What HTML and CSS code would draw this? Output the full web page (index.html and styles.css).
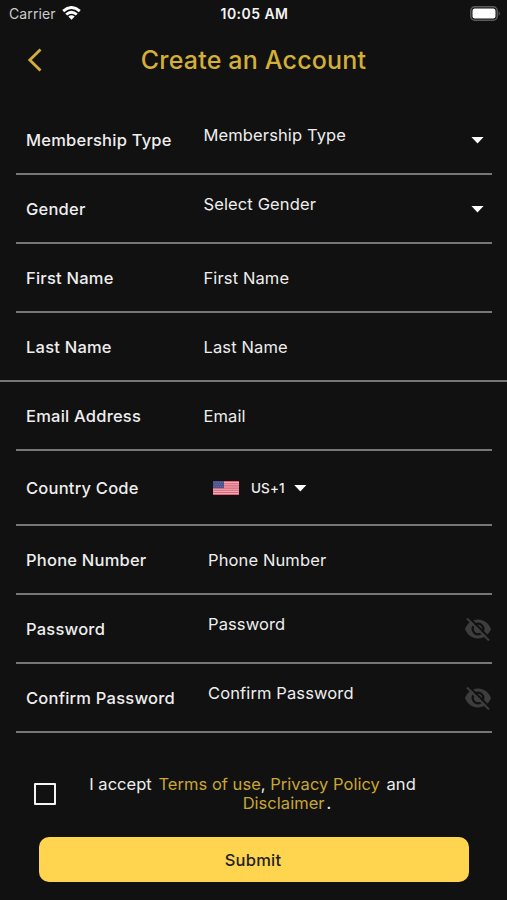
FILE: index.html
```html
<!DOCTYPE html>
<html lang="en">
<head>
<meta charset="utf-8">
<title>Create an Account</title>
<link rel="stylesheet" href="styles.css">
</head>
<body>
<svg class="defs" width="0" height="0" aria-hidden="true">
  <symbol id="eye-off" viewBox="0 0 28 24">
    <path fill-rule="evenodd" d="M1 12C3.500 6 8.200 2.500 14 2.500S24.500 6 27 12C24.500 18 19.800 21.500 14 21.500S3.500 18 1 12ZM14 5.500a6.500 6.500 0 1 0 0 13a6.500 6.500 0 0 0 0-13Z"/>
    <circle cx="14" cy="12" r="4.200"/>
    <path class="slash-gap" d="M4.500 0L26.500 22"/>
    <path class="slash" d="M3 1.500L25 23.500"/>
  </symbol>
</svg>
<div class="screen">
  <header class="status">
    <div class="carrier"><span>Carrier</span>
      <svg width="19" height="14" viewBox="0 0 19 14"><g fill="none" stroke="#fff" stroke-width="2.800"><path d="M1.200 5.100Q9.500-2.200 17.800 5.100"/><path d="M4.200 8.500Q9.500 3.900 14.800 8.500"/></g><path fill="#fff" d="M6.300 10.500Q9.500 8 12.700 10.500L9.500 13.800Z"/></svg>
    </div>
    <span class="time">10:05 AM</span>
    <svg class="battery" width="31" height="15" viewBox="0 0 31 15"><rect x=".8" y=".8" width="26.400" height="13.400" rx="4" fill="none" stroke="#5c5c5c" stroke-width="1.500"/><rect x="2.500" y="2.500" width="23" height="10" rx="2.200" fill="#fff"/><path fill="#5c5c5c" d="M28.600 5q2.400 2.500 0 5z"/></svg>
  </header>
  <div class="titlebar">
    <svg class="back" width="16" height="24" viewBox="0 0 16 24"><path d="M13.500 1.500L2.800 12L13.500 22.500" fill="none" stroke="#d4af37" stroke-width="2.800"/></svg>
    <h1>Create an Account</h1>
  </div>
  <main class="form">
    <div class="row"><label>Membership Type</label><span class="value raised">Membership Type</span><i class="caret"></i></div>
    <div class="row"><label>Gender</label><span class="value raised">Select Gender</span><i class="caret"></i></div>
    <div class="row"><label>First Name</label><span class="value">First Name</span></div>
    <div class="row wide"><label>Last Name</label><span class="value">Last Name</span></div>
    <div class="row"><label>Email Address</label><span class="value">Email</span></div>
    <div class="row country"><label>Country Code</label>
      <svg class="flag" width="26" height="14" viewBox="0 0 26 14"><rect width="26" height="14" fill="#f0aab5"/><path stroke="#dc6478" stroke-width="1.100" d="M0 .5h26M0 2.700h26M0 4.900h26M0 7.100h26M0 9.300h26M0 11.500h26M0 13.600h26"/><rect width="11" height="7.200" fill="#51518c"/><path stroke="#7775a5" stroke-width=".7" stroke-dasharray="1 1" d="M1 1.500h9M2 3.500h8M1 5.500h9"/></svg>
      <span class="code">US+1</span><i class="caret"></i>
    </div>
    <div class="row inset"><label>Phone Number</label><span class="value">Phone Number</span></div>
    <div class="row inset"><label>Password</label><span class="value raised">Password</span><svg class="eye" width="28" height="24"><use href="#eye-off"/></svg></div>
    <div class="row inset"><label>Confirm Password</label><span class="value raised">Confirm Password</span><svg class="eye" width="28" height="24"><use href="#eye-off"/></svg></div>
  </main>
  <div class="terms">
    <span class="checkbox"></span>
    <p><span>I accept <a class="first">Terms of use</a>, <a>Privacy Policy</a> <span class="and">and</span></span><br><span class="last"><a>Disclaimer</a><span class="dot">.</span></span></p>
  </div>
  <button class="submit">Submit</button>
</div>
</body>
</html>
```
FILE: styles.css
```css
* { box-sizing: border-box; }
body { margin: 0; background: #111; }
.defs { display: block; }
.screen {
  width: 507px;
  height: 900px;
  display: flex;
  flex-direction: column;
  background: #111;
  color: #eee;
  font-family: Inter, "Liberation Sans", sans-serif;
  font-size: 16.5px;
  letter-spacing: .12px;
  overflow: hidden;
}
.status {
  height: 28px;
  flex: none;
  display: grid;
  grid-template-columns: 1fr auto 1fr;
  align-items: center;
  padding: 0 7px 1px 9px;
  font-size: 14px;
}
.carrier { display: flex; align-items: center; gap: 6px; color: #ccc; letter-spacing: .1px; }
.carrier svg { margin-top: -1px; }
.time { font-weight: 600; letter-spacing: .45px; color: #f4f4f4; }
.battery { justify-self: end; margin: 0 -1px 0 0; }
.titlebar {
  height: 78px;
  flex: none;
  display: grid;
  grid-template-columns: 114px 1fr 114px;
  align-items: start;
}
.back { margin: 20px 0 0 27px; }
h1 {
  margin: 16px 0 0;
  font-size: 25px;
  line-height: 32px;
  font-weight: 500;
  letter-spacing: .18px;
  text-align: center;
  color: #d4af37;
  white-space: nowrap;
}
.form { flex: none; }
.row {
  height: 69px;
  margin: 0 15px 0 16px;
  padding-left: 10px;
  border-bottom: 2px solid #777;
  display: flex;
  align-items: center;
  line-height: 20px;
}
.row.wide { margin: 0; padding-left: 26px; }
.row label { width: 177.5px; flex: none; font-weight: 550; letter-spacing: .22px; white-space: nowrap; }
.row.inset label { width: 182px; }
.value { flex: 1; white-space: nowrap; }
.value.raised { margin-bottom: 9px; }
.caret {
  width: 13px;
  height: 7px;
  margin: 1px 8px 0 0;
  background: #fff;
  clip-path: polygon(0 0, 100% 0, 50% 100%);
}
.row.country { height: 75px; }
.flag { margin-left: 9.5px; }
.code { margin: 0 9px 0 12px; font-size: 13.5px; font-weight: 500; }
.eye { fill: #3d3d3d; margin-top: 1px; }
.slash { stroke: #3d3d3d; stroke-width: 2; }
.slash-gap { stroke: #111; stroke-width: 2; }
.terms {
  height: 104px;
  flex: none;
  padding: 42px 0 0 34px;
  display: flex;
}
.checkbox { width: 22px; height: 22px; margin: 8px 32.5px 0 0; border: 2px solid #f4f4f4; border-radius: 1px; }
.terms p {
  width: 328px;
  margin: 0;
  line-height: 19px;
  text-align: center;
  white-space: nowrap;
  letter-spacing: .03px;
}
.terms a { color: #c9a633; }
.terms .first, .terms .and { margin-left: 2px; }
.last { padding-left: 69px; }
.dot { margin-left: 2px; }
.submit {
  width: 430px;
  height: 45px;
  flex: none;
  margin: 0 0 0 39px;
  padding: 0 2px 0 0;
  border: 0;
  border-radius: 10px;
  background: #ffd54f;
  color: #222;
  font: 500 16.5px/20px Inter, "Liberation Sans", sans-serif;
  letter-spacing: .25px;
}
```
